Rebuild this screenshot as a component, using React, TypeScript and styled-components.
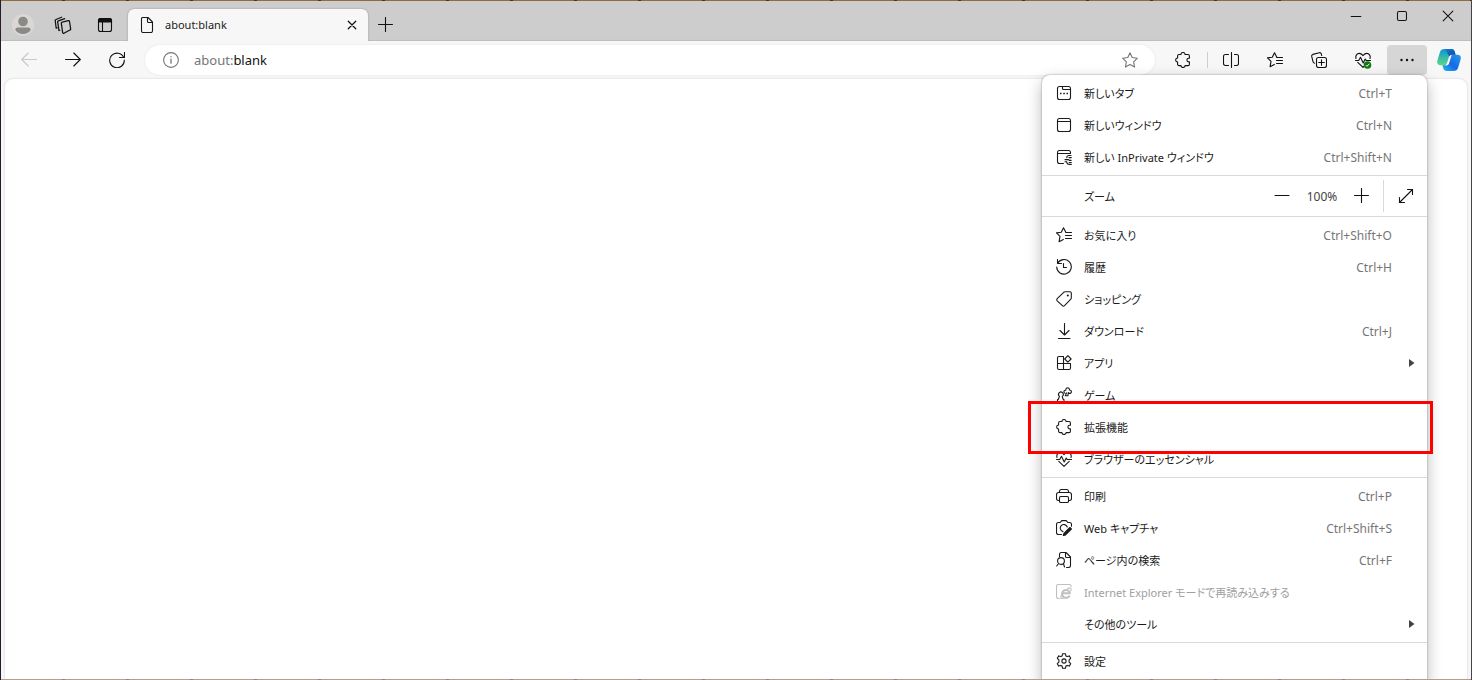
import React from 'react';
import styled, { createGlobalStyle, css } from 'styled-components';

const GlobalStyle = createGlobalStyle`
  *, *::before, *::after { box-sizing: border-box; }
  html, body { margin: 0; }
  body {
    font-family: "Noto Sans", "Noto Sans CJK JP", sans-serif;
    font-size: 12px;
    line-height: 16px;
    color: #1a1a1a;
    overflow: hidden;
  }
  button, input { font: inherit; color: inherit; }
`;

const frameEdge = css`
  content: "";
  flex: none;
  height: 1px;
`;

const BrowserWindow = styled.div`
  position: relative;
  display: flex;
  flex-direction: column;
  height: 100vh;
  overflow: hidden;
  background: #f7f7f7;
  border-left: 1px solid #2b1a2b;
  border-right: 1px solid #46434a;
  &::before {
    ${frameEdge}
    background: repeating-linear-gradient(90deg, #916a3d 0 61px, #4a2f2c 61px 64px);
  }
  &::after {
    ${frameEdge}
    position: relative;
    z-index: 3;
    background: repeating-linear-gradient(90deg, #b3a08c 0 61px, #8f8480 61px 64px);
  }
`;

const TitleBar = styled.header`
  display: flex;
  height: 40px;
  flex: none;
  background: #cdcdcd;
  box-shadow: inset 0 -1px 1px #bdbdbd;
`;

const TitleActions = styled.div`
  display: flex;
  align-items: center;
  padding: 8px 2px 0 2px;
`;

const IconButton = styled.button<{ $w?: number; $h?: number; $active?: boolean; $color?: string }>`
  display: flex;
  align-items: center;
  justify-content: center;
  flex: none;
  width: ${(p) => p.$w ?? 40}px;
  height: ${(p) => p.$h ?? 30}px;
  padding: 0;
  border: 0;
  border-radius: 4px;
  background: ${(p) => (p.$active ? '#d6d6d6' : 'transparent')};
  color: ${(p) => p.$color ?? '#111'};
`;

const Tab = styled.div`
  display: flex;
  align-items: center;
  width: 240px;
  height: 32px;
  margin-top: 8px;
  padding: 0 6px 0 11px;
  gap: 10px;
  border-radius: 6px 6px 0 0;
  background: #f7f7f7;
  box-shadow: 0 0 2px #8c8c8c;
  clip-path: inset(-3px -3px 0 -3px);
`;

const TabTitle = styled.span`
  flex: 1;
  font-size: 11px;
`;

const NewTabSlot = styled.div`
  padding: 8px 0 0 4px;
`;

const WindowControls = styled.div`
  display: flex;
  margin-left: auto;
`;

const Toolbar = styled.nav`
  display: flex;
  align-items: center;
  flex: none;
  height: 38px;
  padding: 0 4px 0 8px;
  gap: 4px;
`;

const AddressBar = styled.label`
  display: flex;
  align-items: center;
  flex: 1;
  height: 30px;
  margin: 0 4px;
  padding: 0 17px 0 18px;
  gap: 15px;
  border-radius: 15px;
  background: #fff;
  color: #767676;
  box-shadow: 0 0 2px #dedede;
`;

const AddressField = styled.div`
  position: relative;
  flex: 1;
  height: 20px;
  font-size: 13px;
  line-height: 20px;
`;

const AddressInput = styled.input`
  position: absolute;
  inset: 0;
  width: 100%;
  padding: 0;
  border: 0;
  outline: 0;
  background: transparent;
`;

const AddressText = styled.span`
  color: #767676;
  b { font-weight: 400; color: #111; }
`;

const ToolbarDivider = styled.span`
  width: 1px;
  height: 16px;
  margin: 0 -1px 0 0;
  background: #cfcfcf;
`;

const PageView = styled.main`
  flex: 1;
  margin: 0 4px 0 4px;
  border-radius: 8px 8px 0 0;
  background: #fff;
  box-shadow: 0 0 2px #c4c4c4;
`;

const Menu = styled.div`
  position: absolute;
  top: 75px;
  right: 44px;
  z-index: 2;
  width: 385px;
  padding: 2px 0 8px;
  border-radius: 8px;
  background: #fff;
  box-shadow: 0 0 2px #8a8a8a, 0 6px 16px rgba(0, 0, 0, 0.28);
  font-feature-settings: "palt";
`;

const Group = styled.div`
  padding-bottom: 2px;
  & + & { padding-top: 2px; border-top: 1px solid #d9d9d9; }
`;

const MenuItem = styled.button`
  position: relative;
  display: flex;
  align-items: center;
  width: 100%;
  height: 32px;
  padding: 0 12px 0 14px;
  gap: 12px;
  border: 0;
  background: transparent;
  text-align: left;
  &:disabled { color: #a0a0a0; }
  &:disabled svg { color: #c0c0c0; }
`;

const IconSlot = styled.span`
  display: flex;
  flex: none;
  width: 16px;
  height: 16px;
`;

const ItemLabel = styled.span`
  flex: 1;
  padding-top: 2px;
  font-size: 11px;
  white-space: nowrap;
`;

const Shortcut = styled.kbd`
  margin-right: 23px;
  padding-top: 2px;
  font-family: inherit;
  color: #767676;
`;

const Highlight = styled.span`
  position: absolute;
  inset: -10px -6px -11px -14px;
  z-index: 1;
  border: 3px solid #f00;
  pointer-events: none;
`;

const ZoomRow = styled.div`
  display: flex;
  align-items: center;
  height: 41px;
  padding-left: 42px;
  border-top: 1px solid #d9d9d9;
  & + * { padding-top: 2px; border-top: 1px solid #d9d9d9; }
`;

const ZoomValue = styled.output`
  width: 40px;
  padding-top: 2px;
  text-align: center;
  color: #444;
`;

const ZoomDivider = styled.span`
  width: 1px;
  height: 32px;
  margin-left: 1px;
  background: #d9d9d9;
`;

type IconProps = { size?: number; children: React.ReactNode };

const Icon = ({ size = 16, children }: IconProps) => (
  <svg width={size} height={size} viewBox="0 0 16 16" fill="none" stroke="currentColor" strokeWidth="1.1" strokeLinecap="round" strokeLinejoin="round" aria-hidden="true">
    {children}
  </svg>
);

const starLines = (
  <Icon>
    <path d="M9.700 5 7.500.7 5.300 5.200.5 5.900 4 9.400l-.9 5.300 4.200-2.300M9.700 5.500h5.800M9.500 8.500h6M9.500 11.500h6" />
  </Icon>
);
const puzzle = (
  <Icon>
    <path d="M4 2.500h1.900C6 1.300 6.900.5 8 .5s2 .8 2.100 2H13c.8 0 1.400.6 1.400 1.400v2.400h-.7a1.800 1.800 0 0 0 0 3.600h.7v2.300c0 .8-.6 1.400-1.400 1.400h-2.900c-.1 1.100-1 1.900-2.100 1.900s-2-.8-2.100-1.900H4c-.8 0-1.400-.6-1.400-1.400v-2.100C1.400 10 .6 9.200.6 8.100s.8-2 2-2.100V3.900c0-.8.6-1.400 1.400-1.400Z" />
  </Icon>
);
const pulse = (
  <Icon>
    <path d="M1 6.500C.2 3.500 2 1.400 4.200 1.400 6.200 1.400 7.200 2.700 8 3.600c.8-.9 1.800-2.200 3.800-2.200 2.200 0 4 2.100 3.200 5.100M2.800 10.400 8 15.300l5.200-4.900M.5 8.500h3.200l1.800-3.200 2.700 5.600 2-3.900 1 1.500h4.300" />
  </Icon>
);
const plus = <Icon><path d="M7.500.5v14M.5 7.500h14" /></Icon>;

const icons = {
  workspaces: (
    <Icon size={18}>
      <path d="m7.300 5.500 5.400-1.300c.5-.1 1 .2 1.100.7l1 6.500c.1.500-.2.900-.6 1L8.800 15.400c-.5.100-1-.2-1.100-.7L6.500 6.500c-.1-.4.300-.9.800-1ZM5.200 12.700l-.8.200L3.300 5.400c-.1-.5.200-.9.600-1l5.600-2M2.800 10.500l-.9.200L1.100 4.100c-.1-.5.200-.9.600-1L6.800 1.100" />
    </Icon>
  ),
  tabActions: (
    <Icon>
      <rect x="1.500" y="1.500" width="13" height="13" rx="2" />
      <path d="M1.500 5V3.500a2 2 0 0 1 2-2h9a2 2 0 0 1 2 2V5Z" fill="currentColor" />
      <path d="M5.500 5v9.500" />
    </Icon>
  ),
  page: (
    <Icon>
      <path d="M3.500.5h5.500l4.500 4.500v9c0 .9-.6 1.500-1.500 1.500H4c-.9 0-1.500-.6-1.500-1.500V2C2.500 1.100 3 .5 3.500.5ZM8.500.6v3.900c0 .6.400 1 1 1h3.900" />
    </Icon>
  ),
  close: <Icon size={10}><path d="m2 2 12 12M14 2 2 14" strokeWidth="2" /></Icon>,
  minimize: <Icon size={12}><path d="M1.500 8.700h13" strokeWidth="1.400" /></Icon>,
  maximize: <Icon size={12}><rect x="2" y="2" width="12" height="12" rx="2" strokeWidth="1.400" /></Icon>,
  windowClose: <Icon size={12}><path d="m1.500 1.500 13 13M14.500 1.500l-13 13" strokeWidth="1.400" /></Icon>,
  back: <Icon><path d="M15.500 7.500H.7M7.200 1 .7 7.500l6.500 6.500" /></Icon>,
  forward: <Icon><path d="M.5 7.500h14.800M8.800 1l6.500 6.500-6.500 6.500" /></Icon>,
  reload: <Icon><path d="M14.700 5.500A7.300 7.300 0 1 0 15.300 8M15.500.5v5h-5" /></Icon>,
  info: (
    <Icon>
      <circle cx="8" cy="8" r="7.400" />
      <path d="M8 7.200v4M8 4.600v.2" strokeWidth="1.300" />
    </Icon>
  ),
  star: <Icon><path d="m8 .8 2.200 4.700 5.200.7-3.800 3.600 1 5.300L8 12.600l-4.600 2.500 1-5.300L.6 6.200l5.200-.7Z" /></Icon>,
  split: (
    <Icon>
      <path d="M8.500.5v15M5.500 2.500H2.500c-1.100 0-2 .8-2 1.900v7.200c0 1.100.9 1.900 2 1.900h3M11.500 2.500h2.200c1 0 1.800.8 1.800 1.900v7.200c0 1.100-.8 1.900-1.800 1.900h-2.200" />
    </Icon>
  ),
  collections: (
    <Icon>
      <rect x="5.500" y="5.500" width="10" height="10" rx="2" />
      <path d="M10.500 7.700v5.600M7.700 10.500h5.600M3.600 11.200c-.9-.2-1.400-.8-1.600-1.600L.7 4.400c-.2-.9.300-1.700 1.200-2L8.300.7c.9-.2 1.700.3 2 1.200l.4 1.600" />
    </Icon>
  ),
  more: (
    <Icon>
      <g fill="currentColor" stroke="none">
        <circle cx="2.500" cy="8" r="1.200" />
        <circle cx="8" cy="8" r="1.200" />
        <circle cx="13.500" cy="8" r="1.200" />
      </g>
    </Icon>
  ),
  newTab: (
    <Icon>
      <rect x="1.500" y="1.500" width="13" height="13" rx="2" />
      <path d="M6.500 1.500v2c0 .6.400 1 1 1h7" />
      <path d="M4 8.500h1.500M7.300 8.500h1.500M10.500 8.500H12" strokeWidth="1.500" strokeLinecap="butt" />
    </Icon>
  ),
  newWindow: (
    <Icon>
      <rect x="1.500" y="1.500" width="13" height="13" rx="2" />
      <path d="M1.500 4.500h13" />
    </Icon>
  ),
  inPrivate: (
    <Icon>
      <path d="M7.500 14.500h-4a2 2 0 0 1-2-2v-9c0-1.100.9-2 2-2h9a2 2 0 0 1 2 2v1M1.500 4.500h13" />
      <path d="M15 6.500h-2c-1.300 0-2.200.8-2.200 2v.2M13 8.600h2.300M9 10.600h3c.7 0 1.100.3 1.300.8h1.800M9 12.700h1.700c.1 1.600 1.100 2.700 2.700 2.700h1.900M13.200 13.500h2.100" />
    </Icon>
  ),
  minus: <Icon><path d="M1 7.500h14" /></Icon>,
  fullscreen: <Icon><path d="M1.500 14.500l13-13M9.500 1.500h5v5M6.500 14.500h-5v-5" /></Icon>,
  history: (
    <Icon>
      <path d="M1.500 4.500A7.300 7.300 0 1 1 .7 8M1.500.5v4h4M7.500 4.500v4h3" />
    </Icon>
  ),
  shopping: (
    <Icon>
      <path d="M9 .8h5c.8 0 1.300.5 1.300 1.300v4.800c0 .5-.2.900-.5 1.200l-6.300 6.600c-.6.600-1.500.6-2.100 0L1.200 9.800c-.6-.6-.6-1.500 0-2.100l6.500-6.400c.4-.3.800-.5 1.300-.5Z" />
      <circle cx="11.800" cy="4.500" r=".5" fill="currentColor" />
    </Icon>
  ),
  download: <Icon><path d="M8.500.5v11.300M4 7.500l4.500 4.500L13 7.500M2.500 15.500h11.500" /></Icon>,
  apps: (
    <Icon>
      <path d="M7.500 1.500H3c-.9 0-1.500.6-1.500 1.500v10c0 .9.600 1.500 1.500 1.500h10c.9 0 1.500-.6 1.500-1.500V8.500h-13M7.500 1.500v13M11.900.7l3.200 3.300-3.200 3.200L8.700 4Z" />
    </Icon>
  ),
  games: (
    <Icon>
      <path d="M3 8.800a2.400 2.400 0 1 1 3.800 0l-.6.600.8 2.600 1 .8v2.400H1.500v-2.400l1-.8.9-2.600ZM9 6.200C7.900 5.800 7.600 4.600 8.200 3.800c.5-.6 1.100-.7 1.600-.5C9.600 1.900 10.400.8 11.600.8s2 1 1.800 2.200c1.100-.2 2 .6 2 1.700s-.9 1.800-1.900 1.700c-.6 0-1-.3-1.300-.7L12 8.800H9.300l1.200-2.900" />
    </Icon>
  ),
  print: (
    <Icon>
      <path d="M3.500 12.500H2.400A1.900 1.900 0 0 1 .5 10.600V6.700c0-1.300.9-2.200 2.200-2.200h10.600c1.300 0 2.200.9 2.200 2.200v3.900c0 1.100-.8 1.900-1.900 1.900h-1.100M3.500 4.500v-1c0-1.200.8-2 2-2h5c1.200 0 2 .8 2 2v1" />
      <rect x="3.500" y="8.500" width="9" height="6" rx="1.300" />
    </Icon>
  ),
  capture: (
    <Icon>
      <path d="M5.500 14.500h-3a2 2 0 0 1-2-2v-8c0-1.100.9-2 2-2h1.700l1.500-1.900h4.600l1.500 1.900h1.700c1.100 0 2 .9 2 2v1.700M11.300 7A3.600 3.600 0 1 0 7 11.600" />
      <path d="m8 13.400 5.900-5.900 1.500 1.500-5.900 5.900-2.200.7Z" fill="currentColor" />
    </Icon>
  ),
  find: (
    <Icon>
      <path d="M3.500 4.500v-2c0-1.200.8-2 2-2H10l4.500 4.500v8.500c0 1.200-.8 2-2 2h-2M9.500.6v3.900c0 .6.400 1 1 1h3.900" />
      <circle cx="5" cy="9" r="3.400" />
      <path d="M2.600 11.500.7 14M7.400 11.400l1.100 3.600" />
    </Icon>
  ),
  ie: (
    <Icon>
      <path d="M3.500 14.500h-1a2 2 0 0 1-2-2v-10c0-1.100.9-2 2-2h10.700c1.100 0 2 .9 2 2" />
      <path d="M13.700 11.600A4 4 0 1 1 14 9.200H6.800" strokeWidth="2" strokeLinecap="butt" />
      <path d="M6 10.200c-2 3-1.500 5.400 1.500 3.900M11.500 4.800c3-1.800 4.400-.7 3.200 2" />
    </Icon>
  ),
  settings: (
    <Icon>
      <path d="M6.600.7h2.800l.5 2.200 1.300.7 2.100-.7 1.400 2.400-1.600 1.600v2.200l1.600 1.600-1.400 2.400-2.100-.7-1.300.7-.5 2.200H6.600l-.5-2.200-1.300-.7-2.100.7-1.400-2.400 1.600-1.600V6.900L1.300 5.300l1.400-2.400 2.100.7 1.300-.7Z" />
      <circle cx="8" cy="8" r="2.100" />
    </Icon>
  ),
  arrow: <svg width="6" height="8" viewBox="0 0 6 8" aria-hidden="true"><path d="M0 0v8l5.500-4Z" fill="#444" /></svg>,
};

const Avatar = () => (
  <svg width="22" height="22" viewBox="0 0 22 22" aria-hidden="true">
    <circle cx="11" cy="11" r="11" fill="#dad8d5" />
    <circle cx="11" cy="7.500" r="4.800" fill="#8c8a88" />
    <path d="M3.300 16c0-1.700 1-2.500 2.500-2.500h10.400c1.500 0 2.500.8 2.500 2.500a9.300 9.300 0 0 1-15.400 0Z" fill="#8c8a88" />
  </svg>
);

const PulseChecked = () => (
  <svg width="18" height="18" viewBox="0 0 18 18" fill="none" aria-hidden="true">
    <svg x="1" y="1" width="16" height="16" viewBox="0 0 16 16">{pulse}</svg>
    <circle cx="13.500" cy="14" r="3.800" fill="#107c10" />
    <path d="m11.900 14.200 1.100 1.100 2.300-2.500" stroke="#fff" />
  </svg>
);

const CopilotLogo = () => (
  <svg width="24" height="24" viewBox="0 0 24 24" aria-hidden="true">
    <defs>
      <linearGradient id="copilotLeft" x1="0" y1="0" x2="0" y2="1">
        <stop offset="0" stopColor="#1591d0" />
        <stop offset=".45" stopColor="#2cb5b5" />
        <stop offset="1" stopColor="#5fd97c" />
      </linearGradient>
      <linearGradient id="copilotRight" x1="0" y1="1" x2="1" y2="0">
        <stop offset="0" stopColor="#1fc0f0" />
        <stop offset=".45" stopColor="#1668e8" />
        <stop offset="1" stopColor="#2a9be8" />
      </linearGradient>
      <linearGradient id="copilotTop" x1="0" y1="0" x2="1" y2="1">
        <stop offset="0" stopColor="#1482cb" />
        <stop offset="1" stopColor="#123fa5" />
      </linearGradient>
    </defs>
    <path d="M7.500 1h7.200c1.600 0 2.400 1 2.900 2.500l1 3.200h-3.400c-1.900 0-2.700.9-3.300 2.600L10.300 14c-.6 1.900-1.400 3.200-3.400 3.200H3.500C.7 17.200-.3 15.200.4 12.500L2.900 4.300C3.600 2.100 5.200 1 7.500 1Z" fill="url(#copilotLeft)" />
    <path d="M8 1h6.700c1.600 0 2.400 1 2.900 2.500l1 3.200h-3.400c-1.500 0-2.300.6-2.900 1.700Z" fill="url(#copilotTop)" />
    <path d="M16.500 23H9.300c-1.600 0-2.400-1-2.900-2.500l-1-3.300h1.500c2 0 2.900-1.200 3.500-3.200l1.500-4.700c.6-1.700 1.400-2.600 3.300-2.600h5.300c2.800 0 3.800 2 3.100 4.700l-2.500 8.300c-.7 2.200-2.300 3.300-4.600 3.300Z" fill="url(#copilotRight)" />
    <path d="M14.700 6.900 12 15.600c-.5 1.300-1.300 1.800-2.600 1.800H7.800c1.400-.4 2-1.500 2.500-3.100l1.600-5c.5-1.500 1.300-2.400 2.800-2.400Z" fill="#fff" />
  </svg>
);

type Entry = {
  label: string;
  icon?: React.ReactNode;
  keys?: string;
  submenu?: boolean;
  disabled?: boolean;
  highlighted?: boolean;
};

const windowItems: Entry[] = [
  { label: '新しいタブ', icon: icons.newTab, keys: 'Ctrl+T' },
  { label: '新しいウィンドウ', icon: icons.newWindow, keys: 'Ctrl+N' },
  { label: '新しい InPrivate ウィンドウ', icon: icons.inPrivate, keys: 'Ctrl+Shift+N' },
];

const featureItems: Entry[] = [
  { label: 'お気に入り', icon: starLines, keys: 'Ctrl+Shift+O' },
  { label: '履歴', icon: icons.history, keys: 'Ctrl+H' },
  { label: 'ショッピング', icon: icons.shopping },
  { label: 'ダウンロード', icon: icons.download, keys: 'Ctrl+J' },
  { label: 'アプリ', icon: icons.apps, submenu: true },
  { label: 'ゲーム', icon: icons.games },
  { label: '拡張機能', icon: puzzle, highlighted: true },
  { label: 'ブラウザーのエッセンシャル', icon: pulse },
];

const toolItems: Entry[] = [
  { label: '印刷', icon: icons.print, keys: 'Ctrl+P' },
  { label: 'Web キャプチャ', icon: icons.capture, keys: 'Ctrl+Shift+S' },
  { label: 'ページ内の検索', icon: icons.find, keys: 'Ctrl+F' },
  { label: 'Internet Explorer モードで再読み込みする', icon: icons.ie, disabled: true },
  { label: 'その他のツール', submenu: true },
];

const settingsItems: Entry[] = [{ label: '設定', icon: icons.settings }];

const MenuGroup = ({ items }: { items: Entry[] }) => (
  <Group role="group">
    {items.map((item) => (
      <MenuItem key={item.label} type="button" role="menuitem" disabled={item.disabled}>
        <IconSlot>{item.icon}</IconSlot>
        <ItemLabel>{item.label}</ItemLabel>
        {item.keys && <Shortcut>{item.keys}</Shortcut>}
        {item.submenu && icons.arrow}
        {item.highlighted && <Highlight />}
      </MenuItem>
    ))}
  </Group>
);

export default function App() {
  return (
    <>
      <GlobalStyle />
      <BrowserWindow>
        <TitleBar>
          <TitleActions>
            <IconButton aria-label="Profile"><Avatar /></IconButton>
            <IconButton aria-label="Workspaces">{icons.workspaces}</IconButton>
            <IconButton $w={43} aria-label="Tab actions">{icons.tabActions}</IconButton>
          </TitleActions>
          <Tab>
            {icons.page}
            <TabTitle>about:blank</TabTitle>
            <IconButton $w={20} $h={20} aria-label="Close tab">{icons.close}</IconButton>
          </Tab>
          <NewTabSlot>
            <IconButton $w={28} $h={32} aria-label="New tab">{plus}</IconButton>
          </NewTabSlot>
          <WindowControls>
            <IconButton $w={46} aria-label="Minimize">{icons.minimize}</IconButton>
            <IconButton $w={46} aria-label="Maximize">{icons.maximize}</IconButton>
            <IconButton $w={46} aria-label="Close">{icons.windowClose}</IconButton>
          </WindowControls>
        </TitleBar>
        <Toolbar>
          <IconButton $color="#c8c8c8" aria-label="Back">{icons.back}</IconButton>
          <IconButton aria-label="Forward">{icons.forward}</IconButton>
          <IconButton aria-label="Reload">{icons.reload}</IconButton>
          <AddressBar>
            {icons.info}
            <AddressField>
              <AddressInput aria-label="Address" />
              <AddressText>about:<b>blank</b></AddressText>
            </AddressField>
            {icons.star}
          </AddressBar>
          <IconButton aria-label="Extensions">{puzzle}</IconButton>
          <ToolbarDivider />
          <IconButton aria-label="Split screen">{icons.split}</IconButton>
          <IconButton aria-label="Favorites">{starLines}</IconButton>
          <IconButton aria-label="Collections">{icons.collections}</IconButton>
          <IconButton aria-label="Browser essentials"><PulseChecked /></IconButton>
          <IconButton $active aria-label="Menu">{icons.more}</IconButton>
          <IconButton $w={36} aria-label="Copilot"><CopilotLogo /></IconButton>
        </Toolbar>
        <PageView />
        <Menu role="menu">
          <MenuGroup items={windowItems} />
          <ZoomRow>
            <ItemLabel>ズーム</ItemLabel>
            <IconButton aria-label="Zoom out">{icons.minus}</IconButton>
            <ZoomValue>100%</ZoomValue>
            <IconButton aria-label="Zoom in">{plus}</IconButton>
            <ZoomDivider />
            <IconButton $w={43} aria-label="Full screen">{icons.fullscreen}</IconButton>
          </ZoomRow>
          <MenuGroup items={featureItems} />
          <MenuGroup items={toolItems} />
          <MenuGroup items={settingsItems} />
        </Menu>
      </BrowserWindow>
    </>
  );
}
